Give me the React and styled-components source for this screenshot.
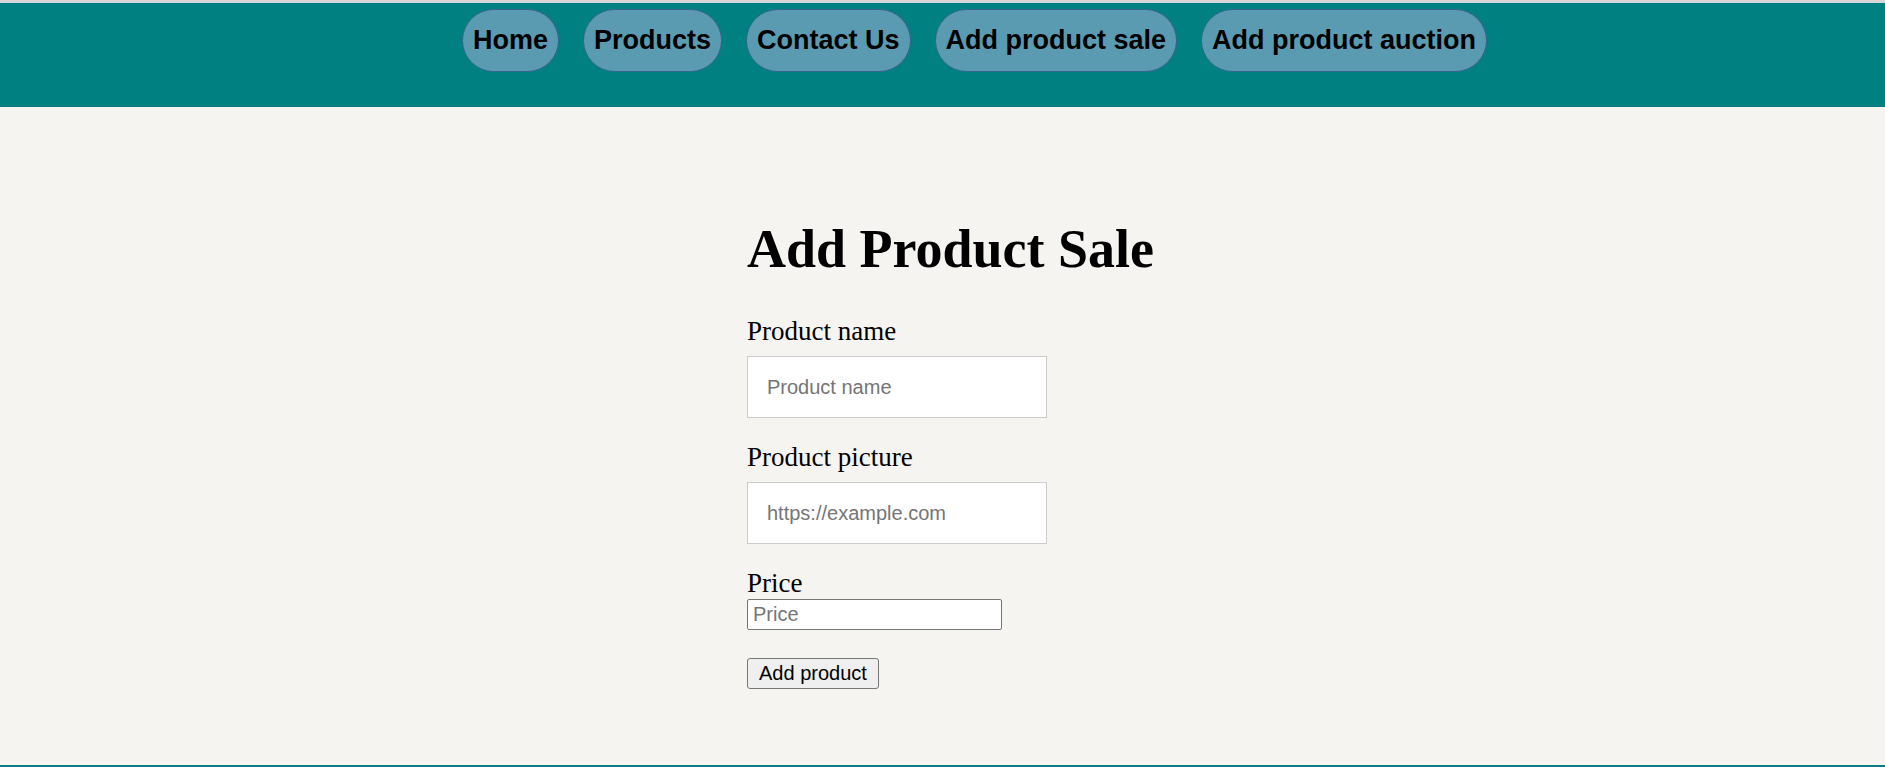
import styled, { createGlobalStyle } from 'styled-components';

const GlobalStyle = createGlobalStyle`
  body {
    margin: 0;
    background-color: #f5f4f0;
    font-family: "Liberation Serif", "Times New Roman", serif;
  }
`;

const Header = styled.header`
  height: 107px;
  box-sizing: border-box;
  border-top: 3px solid #d6d6d6;
  background-color: #008080;
`;

const Nav = styled.nav`
  display: flex;
  justify-content: center;
  gap: 24px;
  padding: 6px 0 0 64px;
`;

const NavLink = styled.a`
  display: flex;
  align-items: center;
  height: 63px;
  box-sizing: border-box;
  padding: 0 10px;
  border: 1px solid #35648f;
  border-radius: 32px;
  background-color: #5b9bb1;
  color: #000;
  font-family: "Liberation Sans", Arial, sans-serif;
  font-size: 27px;
  font-weight: bold;
  text-decoration: none;
  white-space: nowrap;
`;

const Main = styled.main`
  display: flex;
  justify-content: center;
  height: 658px;
  box-sizing: border-box;
  padding-top: 112px;
`;

const Form = styled.form`
  display: flex;
  flex-direction: column;
  align-items: flex-start;
  width: 391px;
`;

const Title = styled.h1`
  margin: 0 0 37px;
  font-size: 54px;
  line-height: 60px;
  font-weight: bold;
  white-space: nowrap;
`;

const Label = styled.label`
  display: block;
  font-size: 27px;
  line-height: 30px;
  color: #000;
`;

const TextInput = styled.input`
  width: 300px;
  height: 62px;
  box-sizing: border-box;
  margin: 10px 0 24px;
  padding: 0 19px;
  border: 1px solid #cccccc;
  background: #fff;
  font-family: "Liberation Sans", Arial, sans-serif;
  font-size: 20px;
  outline: none;

  &::placeholder {
    color: #757575;
  }
`;

const PlainInput = styled.input`
  width: 255px;
  height: 31px;
  box-sizing: border-box;
  margin: 1px 0 0;
  padding: 0 5px;
  border: 1px solid #767676;
  border-radius: 2px;
  background: #fff;
  font-family: "Liberation Sans", Arial, sans-serif;
  font-size: 20px;

  &::placeholder {
    color: #757575;
  }
`;

const SubmitButton = styled.button`
  height: 31px;
  box-sizing: border-box;
  margin-top: 28px;
  padding: 0 11px;
  border: 1px solid #767676;
  border-radius: 3px;
  background-color: #efefef;
  color: #000;
  font-family: "Liberation Sans", Arial, sans-serif;
  font-size: 20px;
`;

const Footer = styled.footer`
  height: 80px;
  background-color: #008080;
`;

const links = ['Home', 'Products', 'Contact Us', 'Add product sale', 'Add product auction'];

const App = () => (
  <>
    <GlobalStyle />
    <Header>
      <Nav>
        {links.map(link => (
          <NavLink key={link} href="#">
            {link}
          </NavLink>
        ))}
      </Nav>
    </Header>
    <Main>
      <Form onSubmit={e => e.preventDefault()}>
        <Title>Add Product Sale</Title>
        <Label htmlFor="name">Product name</Label>
        <TextInput id="name" type="text" placeholder="Product name" />
        <Label htmlFor="picture">Product picture</Label>
        <TextInput id="picture" type="text" placeholder="https://example.com" />
        <Label htmlFor="price">Price</Label>
        <PlainInput id="price" type="number" placeholder="Price" />
        <SubmitButton type="submit">Add product</SubmitButton>
      </Form>
    </Main>
    <Footer />
  </>
);

export default App;
